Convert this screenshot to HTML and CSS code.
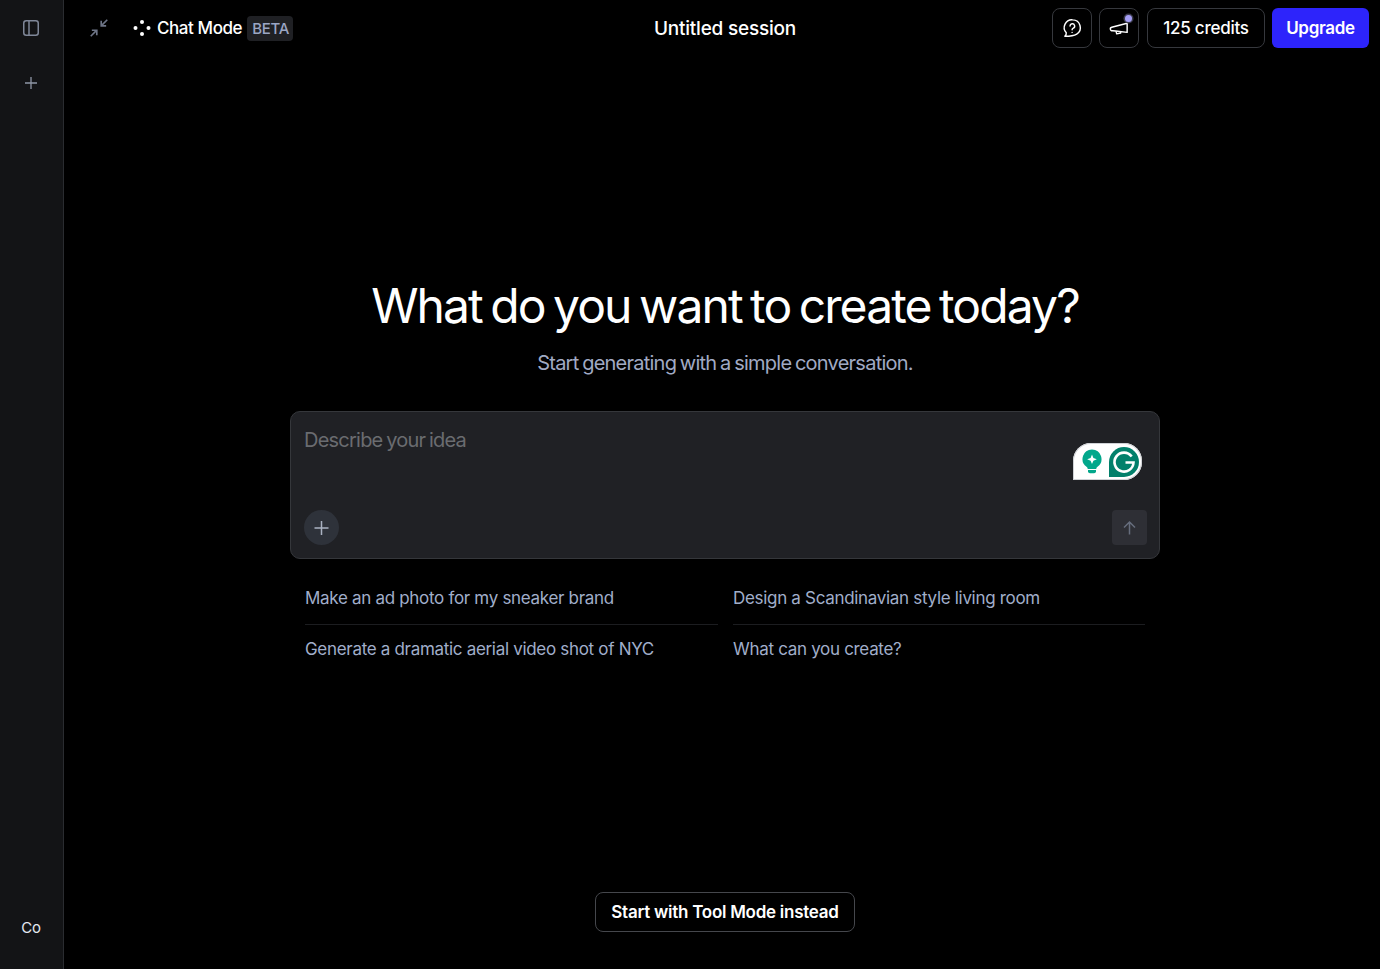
FILE: index.html
```html
<!DOCTYPE html>
<html lang="en">
<head>
<meta charset="utf-8">
<title>Chat Mode</title>
<link rel="stylesheet" href="styles.css">
</head>
<body>
<div class="app">
  <aside class="rail">
    <div class="rail-top">
      <button class="rail-btn" aria-label="Toggle sidebar">
        <svg width="20" height="20" viewBox="0 0 20 20" fill="none" stroke="#7f8798" stroke-width="1.5"><rect x="2.75" y="2.75" width="14.5" height="14.5" rx="2.5"/><path d="M8 2.75v14.5"/></svg>
      </button>
      <button class="rail-btn" aria-label="New">
        <svg width="16" height="16" viewBox="0 0 16 16" fill="none" stroke="#8f96a6" stroke-width="1.3"><path d="M8 2v12M2 8h12"/></svg>
      </button>
    </div>
    <div class="rail-user">Co</div>
  </aside>
  <main class="main">
    <header class="topbar">
      <div class="top-left">
        <button class="collapse" aria-label="Collapse">
          <svg width="22" height="22" viewBox="0 0 20 20" fill="none" stroke="#6d7486" stroke-width="1.5"><path d="M17.500 2.500 12 8M12 3.500V8h4.500M2.500 17.500 8 12M3.500 12H8v4.500"/></svg>
        </button>
        <svg class="dots" width="18" height="18" viewBox="0 0 18 18" fill="#fff"><circle cx="9" cy="2.900" r="2"/><circle cx="2.500" cy="9" r="2"/><circle cx="15.500" cy="9" r="2"/><circle cx="9" cy="15" r="2"/></svg>
        <span class="mode">Chat Mode</span>
        <span class="beta">BETA</span>
      </div>
      <div class="session">Untitled session</div>
      <div class="top-right">
        <button class="icon-btn" aria-label="Help">
          <svg width="22" height="22" viewBox="0 0 20 20" fill="none" stroke="#fff" stroke-width="1.300" stroke-linecap="round" stroke-linejoin="round"><path d="M10.600 2.600a7 7 0 0 1 3.700 12.900c-2.600 1.600-6.300 2-10.800 2 1-1 1.500-2.100 1.300-3.200a7 7 0 0 1 5.800-11.700Z"/><path d="M8.200 8.200a2.100 2.100 0 1 1 3 1.900c-.8.400-1.100.9-1.100 1.500"/><path d="M10.100 14h.01"/></svg>
        </button>
        <button class="icon-btn notify" aria-label="Announcements">
          <svg width="22" height="22" viewBox="0 0 20 20" fill="none" stroke="#fff" stroke-width="1.300" stroke-linejoin="round"><path d="M3.400 9.300 17.400 5.700v8.300L6.900 12.800 4.200 12.500a1.600 1.600 0 0 1-.8-3.200Z"/><path d="m7.300 12.800.6 2.500 3.700-.8-.3-1.400"/></svg>
          <span class="dot"></span>
        </button>
        <button class="credits">125 credits</button>
        <button class="upgrade">Upgrade</button>
      </div>
    </header>
    <section class="center">
      <h1>What do you want to create today?</h1>
      <p class="sub">Start generating with a simple conversation.</p>
      <div class="prompt">
        <div class="placeholder">Describe your idea</div>
        <div class="grammarly">
          <svg width="22" height="26" viewBox="0 0 22 26"><path fill="#02a78b" d="M11 .5a9.500 9.500 0 0 1 5.500 17.200c-.8.600-1.200 1.200-1.200 2.300H6.700c0-1.100-.4-1.700-1.200-2.300A9.500 9.500 0 0 1 11 .5Z"/><path fill="#fff" d="m11 5.500 1.400 3.400 3.400 1.400-3.400 1.400L11 15.100l-1.400-3.400-3.400-1.400 3.400-1.400Z"/><path fill="#02a78b" d="M7 21h8v1.200a2 2 0 0 1-2 2H9a2 2 0 0 1-2-2Z"/></svg>
          <svg width="30" height="30" viewBox="0 0 30 30"><path fill="#02806b" d="M15 0a15 15 0 0 1 0 30H0V15A15 15 0 0 1 15 0Z"/><path fill="none" stroke="#fff" stroke-width="2.600" d="M22.700 9.500A9.500 9.500 0 1 0 24.500 15.500H16.500"/></svg>
        </div>
        <div class="prompt-bar">
          <button class="add" aria-label="Add">
            <svg width="16" height="16" viewBox="0 0 16 16" fill="none" stroke="#aab2c2" stroke-width="1.500"><path d="M7.500 1v14M.5 8h14"/></svg>
          </button>
          <button class="send" aria-label="Send">
            <svg width="16" height="16" viewBox="0 0 16 16" fill="none" stroke="#666d7d" stroke-width="1.500"><path d="M7.500 14.500V2M2 7.500 7.500 2 13 7.500"/></svg>
          </button>
        </div>
      </div>
      <div class="suggestions">
        <div class="sugg">Make an ad photo for my sneaker brand</div>
        <div class="sugg">Design a Scandinavian style living room</div>
        <div class="sugg">Generate a dramatic aerial video shot of NYC</div>
        <div class="sugg">What can you create?</div>
      </div>
    </section>
    <footer class="foot">
      <button class="tool">Start with Tool Mode instead</button>
    </footer>
  </main>
</div>
</body>
</html>
```
FILE: styles.css
```css
* { box-sizing: border-box; }
html, body { margin: 0; height: 100%; background: #000; }
body { font-family: Inter, "Liberation Sans", sans-serif; color: #fff; overflow: hidden; }
button { font: inherit; color: inherit; background: none; border: 0; padding: 0; display: flex; align-items: center; justify-content: center; }
.app { display: flex; height: 969px; }
.rail { width: 64px; flex: none; background: #131416; border-right: 1px solid #2a2c30; display: flex; flex-direction: column; justify-content: space-between; align-items: center; padding: 8px 1px 21px 0; }
.rail-top { display: flex; flex-direction: column; gap: 15px; }
.rail-btn { width: 40px; height: 40px; }
.rail-user { font-size: 15px; line-height: 40px; height: 40px; color: #e4e8f0; letter-spacing: -.3px; }
.main { flex: 1; min-width: 0; display: flex; flex-direction: column; padding-left: 6px; }
.topbar { height: 56px; flex: none; display: grid; grid-template-columns: minmax(0, 1fr) auto minmax(0, 1fr); align-items: center; padding: 0 11px; }
.top-left { display: flex; align-items: center; margin-left: -11px; }
.collapse { width: 40px; height: 40px; margin-left: 9px; }
.dots { margin-left: 14px; }
.mode { margin-left: 6px; font-size: 17px; font-weight: 500; letter-spacing: -.42px; }
.beta { margin-left: 5px; height: 25px; padding: 0 4px 0 5px; border-radius: 4px; background: #1f2024; color: #9ba6c4; font-size: 15px; font-weight: 500; line-height: 25px; letter-spacing: -.3px; }
.session { font-size: 19px; font-weight: 500; letter-spacing: -.22px; text-align: center; }
.top-right { display: flex; justify-content: flex-end; gap: 7px; }
.icon-btn { position: relative; width: 40px; height: 40px; border: 1px solid #36383d; border-radius: 8px; }
.notify { margin-right: 1px; }
.dot { position: absolute; top: 6px; right: 6px; width: 7px; height: 7px; border-radius: 50%; background: #a49ef5; box-shadow: 0 0 0 1.5px #3a3a4a; }
.credits { height: 40px; width: 118px; border: 1px solid #36383d; border-radius: 8px; font-size: 17px; font-weight: 500; letter-spacing: -.24px; }
.upgrade { height: 40px; width: 97px; border-radius: 6px; background: #2d24fb; font-size: 17px; font-weight: 600; letter-spacing: -.3px; }
.center { flex: 1; display: flex; flex-direction: column; align-items: center; padding-top: 220px; }
h1 { margin: 0; font-size: 48px; line-height: 60px; font-weight: 400; letter-spacing: -1.9px; word-spacing: -3.200px; }
.sub { margin: 12px 0 0; font-size: 20px; line-height: 30px; color: #a0aac4; letter-spacing: -.76px; word-spacing: -1.200px; }
.prompt { position: relative; width: 870px; height: 148px; margin-top: 33px; background: #202125; border: 1px solid #35373b; border-radius: 10px; padding: 13px 12px 13px 13px; display: flex; flex-direction: column; justify-content: space-between; }
.placeholder { font-size: 20px; line-height: 30px; color: #6a6c70; letter-spacing: -.77px; word-spacing: -1.200px; }
.grammarly { position: absolute; top: 31px; right: 17px; width: 69px; height: 37px; background: #fff; border-radius: 18px 18px 18px 0; display: flex; align-items: center; justify-content: space-between; padding: 0 3px 0 8px; box-shadow: inset 0 0 0 1px #cfd2d6; }
.prompt-bar { display: flex; justify-content: space-between; align-items: center; }
.add { width: 35px; height: 35px; border-radius: 50%; background: #2e323a; }
.send { width: 35px; height: 35px; border-radius: 4px; background: #2e2f35; }
.suggestions { width: 840px; display: grid; grid-template-columns: 413px 412px; column-gap: 15px; margin-top: 14px; }
.sugg { height: 51px; font-size: 17px; line-height: 48px; color: #a0aeca; letter-spacing: -.31px; }
.sugg:nth-child(1), .sugg:nth-child(2) { height: 52px; line-height: 50px; border-bottom: 1px solid #1c1d20; }
.foot { flex: none; height: 77px; display: flex; justify-content: center; }
.tool { width: 260px; height: 40px; border: 1px solid #45474c; border-radius: 8px; font-size: 17px; font-weight: 600; letter-spacing: -.26px; }
```
